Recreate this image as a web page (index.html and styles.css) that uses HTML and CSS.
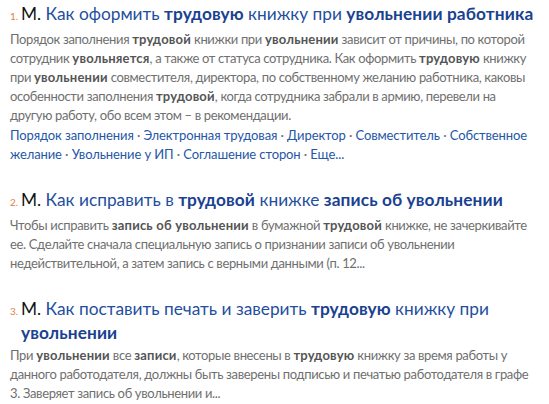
FILE: index.html
```html
<!DOCTYPE html>
<html lang="ru">
<head>
    <meta charset="UTF-8">
    <title>Результаты поиска</title>
    <link rel="stylesheet" href="styles.css">
</head>
<body>
<div class="results">
    <div class="result">
        <h2 class="title"><span class="num">1.</span><span class="site">М.</span> <a href="#">Как оформить <b>трудовую</b> книжку при <b>увольнении работника</b></a></h2>
        <p class="snippet">Порядок заполнения <b>трудовой</b> книжки при <b>увольнении</b> зависит от причины, по которой сотрудник <b>увольняется</b>, а также от статуса сотрудника. Как оформить <b>трудовую</b> книжку при <b>увольнении</b> совместителя, директора, по собственному желанию работника, каковы особенности заполнения <b>трудовой</b>, когда сотрудника забрали в армию, перевели на<br>другую работу, обо всем этом – в рекомендации.</p>
        <p class="links"><a href="#">Порядок заполнения</a> · <a href="#">Электронная трудовая </a> · <a href="#">Директор</a> · <a href="#">Совместитель</a> · <a href="#">Собственное желание</a> · <a href="#">Увольнение у ИП</a> · <a href="#">Соглашение сторон</a> · <a href="#">Еще...</a></p>
    </div>

    <div class="result">
        <h2 class="title"><span class="num">2.</span><span class="site">М.</span> <a href="#">Как исправить в <b>трудовой</b> книжке <b>запись об увольнении</b></a></h2>
        <p class="snippet">Чтобы исправить <b>запись об увольнении</b> в бумажной <b>трудовой</b> книжке, не зачеркивайте ее. Сделайте сначала специальную запись о признании записи об увольнении недействительной, а затем запись с верными данными (п. 12...</p>
    </div>

    <div class="result">
        <h2 class="title"><span class="num">3.</span><span class="site">М.</span> <a href="#">Как поставить печать и заверить <b>трудовую</b> книжку при <b>увольнении</b></a></h2>
        <p class="snippet">При <b>увольнении</b> все <b>записи</b>, которые внесены в <b>трудовую</b> книжку за время работы у данного работодателя, должны быть заверены подписью и печатью работодателя в графе 3. Заверяет запись об увольнении и...</p>
    </div>
</div>
</body>
</html>
```

FILE: styles.css
```css
* {
    margin: 0;
    padding: 0;
    box-sizing: border-box;
}

body {
    font-family: Lato, "Noto Sans", sans-serif;
    background: #fff;
    color: #6f6f6f;
}

.results {
    width: 541px;
    padding: 3px 0 0 10px;
    display: flex;
    flex-direction: column;
    gap: 25px;
}

.title {
    font-size: 17.3px;
    font-weight: 400;
    line-height: 21px;
    padding-left: 11px;
    text-indent: -11px;
}

.title a {
    color: #1f4f9e;
    text-decoration: none;
}

.title b {
    font-weight: 700;
    color: #1a4290;
    letter-spacing: 0.1px;
}

.num {
    display: inline-block;
    width: 11px;
    text-indent: 0;
    font-size: 10px;
    color: #e3803d;
}

.site {
    color: #111;
}

.snippet {
    font-size: 13px;
    line-height: 19px;
    margin-top: 3px;
    letter-spacing: -0.35px;
}

.snippet b {
    color: #555;
    letter-spacing: 0.2px;
}

.links {
    font-size: 13px;
    line-height: 19px;
    margin-top: 1px;
    letter-spacing: -0.1px;
    color: #6f6f6f;
}

.links a {
    color: #2557a7;
    text-decoration: none;
}
```
